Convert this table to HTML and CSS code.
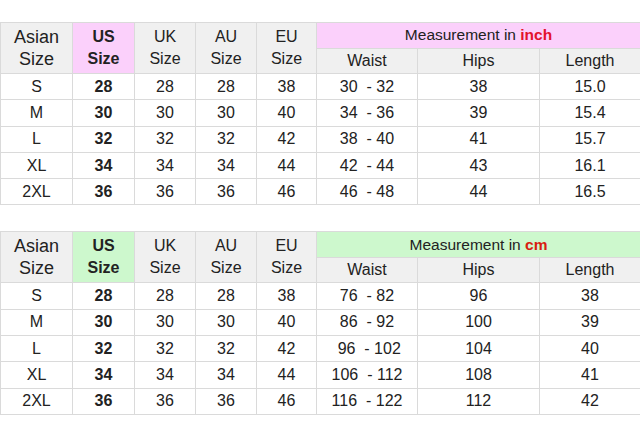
FILE: index.html
```html
<!DOCTYPE html>
<html>
<head>
<meta charset="utf-8">
<link rel="stylesheet" href="styles.css">
</head>
<body>
<div class="page">
  <table class="chart chart-inch">
    <colgroup>
      <col class="c1"><col class="c2"><col class="c3"><col class="c4"><col class="c5"><col class="c6"><col class="c7"><col class="c8">
    </colgroup>
    <thead>
      <tr class="h1">
        <th rowspan="2" class="big">Asian<br>Size</th>
        <th rowspan="2" class="us">US<br>Size</th>
        <th rowspan="2">UK<br>Size</th>
        <th rowspan="2">AU<br>Size</th>
        <th rowspan="2">EU<br>Size</th>
        <th colspan="3" class="meas">Measurement in <b class="unit">inch</b></th>
      </tr>
      <tr class="h2">
        <th>Waist</th><th>Hips</th><th>Length</th>
      </tr>
    </thead>
    <tbody>
      <tr><td>S</td><td class="b">28</td><td>28</td><td>28</td><td>38</td><td class="w">30  - 32</td><td>38</td><td>15.0</td></tr>
      <tr><td>M</td><td class="b">30</td><td>30</td><td>30</td><td>40</td><td class="w">34  - 36</td><td>39</td><td>15.4</td></tr>
      <tr><td>L</td><td class="b">32</td><td>32</td><td>32</td><td>42</td><td class="w">38  - 40</td><td>41</td><td>15.7</td></tr>
      <tr><td>XL</td><td class="b">34</td><td>34</td><td>34</td><td>44</td><td class="w">42  - 44</td><td>43</td><td>16.1</td></tr>
      <tr><td>2XL</td><td class="b">36</td><td>36</td><td>36</td><td>46</td><td class="w">46  - 48</td><td>44</td><td>16.5</td></tr>
    </tbody>
  </table>

  <table class="chart chart-cm">
    <colgroup>
      <col class="c1"><col class="c2"><col class="c3"><col class="c4"><col class="c5"><col class="c6"><col class="c7"><col class="c8">
    </colgroup>
    <thead>
      <tr class="h1">
        <th rowspan="2" class="big">Asian<br>Size</th>
        <th rowspan="2" class="us">US<br>Size</th>
        <th rowspan="2">UK<br>Size</th>
        <th rowspan="2">AU<br>Size</th>
        <th rowspan="2">EU<br>Size</th>
        <th colspan="3" class="meas">Measurement in <b class="unit">cm</b></th>
      </tr>
      <tr class="h2">
        <th>Waist</th><th>Hips</th><th>Length</th>
      </tr>
    </thead>
    <tbody>
      <tr><td>S</td><td class="b">28</td><td>28</td><td>28</td><td>38</td><td class="w">76  - 82</td><td>96</td><td>38</td></tr>
      <tr><td>M</td><td class="b">30</td><td>30</td><td>30</td><td>40</td><td class="w">86  - 92</td><td>100</td><td>39</td></tr>
      <tr><td>L</td><td class="b">32</td><td>32</td><td>32</td><td>42</td><td class="w"> 96  - 102</td><td>104</td><td>40</td></tr>
      <tr><td>XL</td><td class="b">34</td><td>34</td><td>34</td><td>44</td><td class="w">106  - 112</td><td>108</td><td>41</td></tr>
      <tr><td>2XL</td><td class="b">36</td><td>36</td><td>36</td><td>46</td><td class="w">116  - 122</td><td>112</td><td>42</td></tr>
    </tbody>
  </table>
</div>
</body>
</html>
```

FILE: styles.css
```css
html, body {
  margin: 0;
  padding: 0;
  background: #ffffff;
}

.page {
  padding-top: 22px;
  display: flex;
  flex-direction: column;
  gap: 26px;
  font-family: "Liberation Sans", Arial, sans-serif;
  color: #222222;
}

.chart {
  width: 640px;
  table-layout: fixed;
  border-collapse: collapse;
}

.c1 { width: 72px; }
.c2 { width: 62px; }
.c3 { width: 61px; }
.c4 { width: 61px; }
.c5 { width: 60px; }
.c6 { width: 101px; }
.c7 { width: 122px; }
.c8 { width: 101px; }

.chart th,
.chart td {
  border: 1px solid #dadada;
  padding: 0;
  text-align: center;
  vertical-align: middle;
}

.chart th {
  background: #f0f0f0;
  font-weight: normal;
  font-size: 16px;
  line-height: 22px;
}

.chart th.big {
  font-size: 18px;
}

.chart th.us {
  font-weight: bold;
  font-size: 16px;
}

.chart-inch th.us,
.chart-inch th.meas {
  background: #fbd0fb;
}

.chart-cm th.us,
.chart-cm th.meas {
  background: #cdf8cd;
}

.chart .h1 th.meas {
  height: 24.5px;
  font-size: 15.5px;
  line-height: 22px;
}

.chart .h2 th {
  height: 24.5px;
  font-size: 16px;
}

.chart-inch .unit { color: #e3132c; }
.chart-cm .unit { color: #d8200f; }

.chart td {
  height: 25.3px;
  font-size: 16px;
  line-height: 18px;
  background: #ffffff;
}

.chart td.b {
  font-weight: bold;
}

.chart td.w {
  white-space: pre;
}
```
